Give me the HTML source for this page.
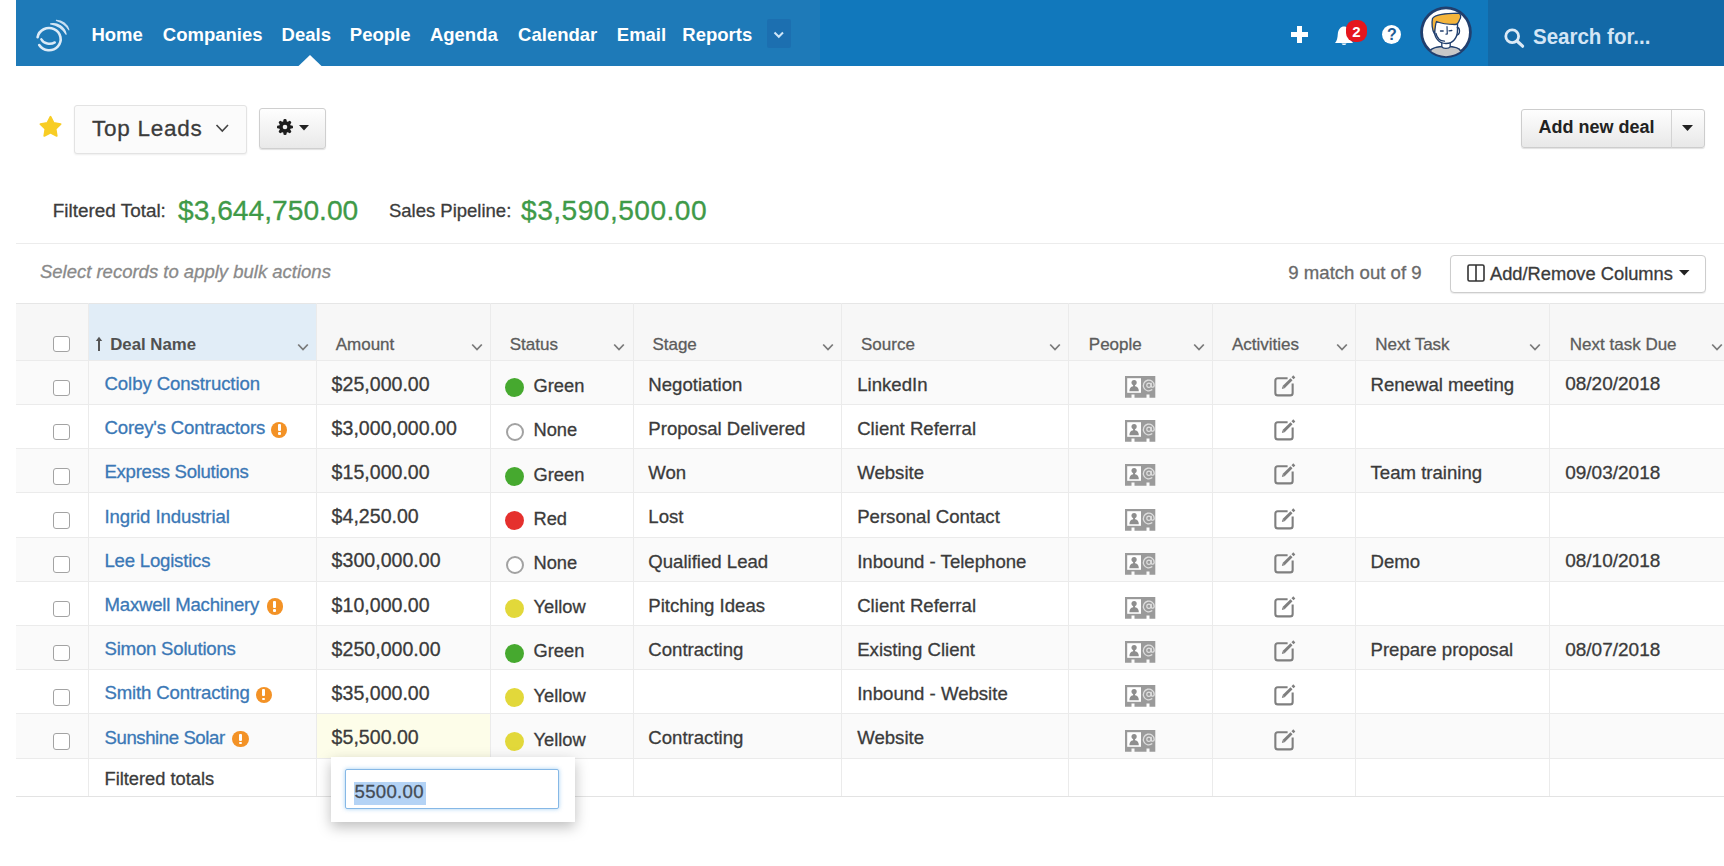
<!DOCTYPE html><html><head><meta charset="utf-8"><style>
html,body{margin:0;padding:0;background:#fff;width:1724px;height:866px;overflow:hidden;position:relative;font-family:"Liberation Sans",sans-serif;}
.t{position:absolute;white-space:nowrap;-webkit-text-stroke:0.3px currentColor;}
.r{position:absolute;box-sizing:border-box;}
svg{position:absolute;overflow:visible;}
</style></head><body>
<div class="r" style="left:16px;top:0px;width:804px;height:66.3px;background:rgb(30,122,184);"></div>
<div class="r" style="left:820px;top:0px;width:668px;height:66.3px;background:rgb(17,120,188);"></div>
<div class="r" style="left:1488px;top:0px;width:236px;height:66.3px;background:rgb(19,105,167);"></div>
<svg style="left:0;top:0" width="100" height="66"><g fill="none" stroke="#dcebf7" stroke-linecap="round">
<path d="M37.6 37.3 A11.6 11.1 0 1 1 39.2 45" stroke-width="2.6"/>
<path d="M41.3 39.3 C43.5 43.8 50.5 45 54.8 42.4" stroke-width="2.4"/>
<path d="M50.6 23.8 A13.4 13.4 0 0 1 66.1 34.2 A22 22 0 0 0 50.6 23.8 Z" fill="#d3e6f5" stroke="#d3e6f5" stroke-width="1.3" stroke-linejoin="round"/>
<path d="M56.4 20.4 A13.2 13.2 0 0 1 68.9 29.8 A22 22 0 0 0 56.4 20.4 Z" fill="#c6def2" stroke="#c6def2" stroke-width="1.2" stroke-linejoin="round"/>
</g></svg>
<div class="t" style="left:91.4px;top:23.69px;font-size:18.5px;line-height:22.2px;color:#fff;font-weight:bold;font-style:normal;-webkit-text-stroke:0;">Home</div>
<div class="t" style="left:162.8px;top:23.69px;font-size:18.5px;line-height:22.2px;color:#fff;font-weight:bold;font-style:normal;-webkit-text-stroke:0;">Companies</div>
<div class="t" style="left:281.6px;top:23.69px;font-size:18.5px;line-height:22.2px;color:#fff;font-weight:bold;font-style:normal;-webkit-text-stroke:0;">Deals</div>
<div class="t" style="left:349.8px;top:23.69px;font-size:18.5px;line-height:22.2px;color:#fff;font-weight:bold;font-style:normal;-webkit-text-stroke:0;">People</div>
<div class="t" style="left:429.9px;top:23.69px;font-size:18.5px;line-height:22.2px;color:#fff;font-weight:bold;font-style:normal;-webkit-text-stroke:0;">Agenda</div>
<div class="t" style="left:518.1px;top:23.69px;font-size:18.5px;line-height:22.2px;color:#fff;font-weight:bold;font-style:normal;-webkit-text-stroke:0;">Calendar</div>
<div class="t" style="left:616.8px;top:23.69px;font-size:18.5px;line-height:22.2px;color:#fff;font-weight:bold;font-style:normal;-webkit-text-stroke:0;">Email</div>
<div class="t" style="left:682.3px;top:23.69px;font-size:18.5px;line-height:22.2px;color:#fff;font-weight:bold;font-style:normal;-webkit-text-stroke:0;">Reports</div>
<div class="r" style="left:767px;top:19.4px;width:23.5px;height:28.6px;background:#1c6fb0;border-radius:2px;"></div>
<svg style="left:773px;top:31px" width="12" height="8"><path d="M1.5 1.5 L5.8 5.8 L10 1.5" fill="none" stroke="#cfe6f8" stroke-width="2"/></svg>
<svg style="left:298px;top:54.8px" width="24" height="12"><path d="M0 11.5 L12 0 L24 11.5 Z" fill="#fff"/></svg>
<div class="r" style="left:1290.5px;top:31.8px;width:17px;height:5px;background:#fff;"></div>
<div class="r" style="left:1296.5px;top:25.7px;width:5px;height:17px;background:#fff;"></div>
<svg style="left:1332px;top:22px" width="24" height="26"><path d="M3 21 C5 19 5.5 16 5.8 12 C6.2 7 9 4.5 12 4.5 C15 4.5 17.8 7 18.2 12 C18.5 16 19 19 21 21 Z" fill="#fff"/><path d="M9.5 21.5 A2.8 2.8 0 0 0 14.5 21.5 Z" fill="#fff"/></svg>
<div class="r" style="left:1346.2px;top:20.4px;width:21.2px;height:21.2px;background:#e5161d;border-radius:9px;"></div>
<div class="t" style="left:1352.3px;top:22.50px;font-size:15px;line-height:18.0px;color:#fff;font-weight:bold;font-style:normal;-webkit-text-stroke:0;">2</div>
<div class="r" style="left:1381.7px;top:24.5px;width:19px;height:19px;background:#fff;border-radius:50%;"></div>
<div class="t" style="left:1386.9px;top:25.46px;font-size:16px;line-height:19.2px;color:#1f5c94;font-weight:bold;font-style:normal;-webkit-text-stroke:0;">?</div>
<svg style="left:1415px;top:3px" width="62" height="60" viewBox="0 0 62 60">
<defs><clipPath id="av"><circle cx="31" cy="29.2" r="24"/></clipPath></defs>
<circle cx="31" cy="29.2" r="24.4" fill="#fff" stroke="#213f6e" stroke-width="2.8"/>
<g clip-path="url(#av)" stroke="#213f6e" stroke-linejoin="round" stroke-linecap="round">
<path d="M14.5 58 L15 48.5 C16 45 22 43.5 31 43.5 C40 43.5 45 45 45.8 48.5 L46 58 Z" fill="#c8c8c8" stroke-width="1.4"/>
<path d="M26.8 38 L26.8 43.5 C28 46 34 46 35.2 43.5 L35.2 38" fill="#fff" stroke-width="1.3"/>
<path d="M19.5 19 L19.5 28 C19.5 35 24 40.5 31 40.5 C38 40.5 42.5 35 42.5 27 L42.5 19 Z" fill="#fff" stroke-width="1.4"/>
<path d="M42.3 24.5 C45 24.5 45.5 31 42.3 32" fill="none" stroke-width="1.3"/>
<path d="M17.5 15.5 C20 11 31 10.5 43 10.2 C46 10.5 46.5 14 44.5 17 C43.5 20 42 21.5 40 21.5 C34 21.5 26 20.5 21.5 18.5 C20.5 21 20 25 19.5 31 C17 27 16.5 20 17.5 15.5 Z" fill="#f5b53b" stroke-width="1.3"/>
<path d="M25.5 28 L28.2 28 M34 27.8 L36.8 27.5" stroke-width="1.3"/>
<path d="M32 23.5 L32.3 31 L31 31.2" fill="none" stroke-width="1.2"/>
<path d="M21 30.5 C22 35 25 38 29.5 38.2" fill="none" stroke-width="1.3"/>
</g></svg>
<svg style="left:1503px;top:28px" width="24" height="22"><circle cx="9.2" cy="8.2" r="6.4" fill="none" stroke="#dceaf6" stroke-width="2.8"/><path d="M14 13 L19.6 18.2" stroke="#dceaf6" stroke-width="3.2" stroke-linecap="round"/></svg>
<div class="t" style="left:1533px;top:24.50px;font-size:20.5px;line-height:24.6px;color:#d3e5f5;font-weight:bold;font-style:normal;-webkit-text-stroke:0;transform:scaleY(1.08);transform-origin:0 80%;">Search for...</div>
<svg style="left:39px;top:114.5px" width="24" height="24" viewBox="0 0 24 24"><path d="M11.50 1.70 L14.67 7.93 L21.58 9.02 L16.64 13.97 L17.73 20.88 L11.50 17.70 L5.27 20.88 L6.36 13.97 L1.42 9.02 L8.33 7.93 Z" fill="#f8cd24" stroke="#f8cd24" stroke-width="1.8" stroke-linejoin="round"/></svg>
<div class="r" style="left:74px;top:104.5px;width:173px;height:49.5px;background:#fbfbfb;border:1px solid #e3e3e3;border-radius:3px;box-shadow:0 1px 2px rgba(0,0,0,0.07);"></div>
<div class="t" style="left:92px;top:114.70px;font-size:22.5px;line-height:27.0px;color:#3b3b3b;font-weight:normal;font-style:normal;letter-spacing:0.75px;">Top Leads</div>
<svg style="left:215px;top:123px" width="16" height="11"><path d="M1.5 2 L7.3 8 L13 2" fill="none" stroke="#444" stroke-width="1.6"/></svg>
<div class="r" style="left:259.3px;top:108px;width:66.5px;height:40.5px;background:linear-gradient(#fefefe,#e9e9e9);border:1px solid #cfcfcf;border-radius:3px;box-shadow:0 1px 1px rgba(0,0,0,0.12);"></div>
<svg style="left:276.6px;top:118.8px" width="16" height="16" viewBox="0 0 16 16"><g fill="#1e1e1e">
<circle cx="8" cy="8" r="5.9"/>
<rect x="6.4" y="0" width="3.2" height="16" rx="1.3"/>
<rect x="6.4" y="0" width="3.2" height="16" rx="1.3" transform="rotate(45 8 8)"/>
<rect x="6.4" y="0" width="3.2" height="16" rx="1.3" transform="rotate(90 8 8)"/>
<rect x="6.4" y="0" width="3.2" height="16" rx="1.3" transform="rotate(135 8 8)"/>
</g><circle cx="8" cy="8" r="2.3" fill="#f1f1f1"/></svg>
<svg style="left:298.5px;top:125px" width="11" height="7"><path d="M0 0 L10 0 L5 5.5 Z" fill="#222"/></svg>
<div class="r" style="left:1520.5px;top:108.8px;width:184px;height:39.2px;background:linear-gradient(#fefefe,#e8e8e8);border:1px solid #cdcdcd;border-radius:3px;box-shadow:0 1px 1px rgba(0,0,0,0.12);"></div>
<div class="r" style="left:1671px;top:109.5px;width:1px;height:38px;background:#d3d3d3;"></div>
<div class="t" style="left:1538.5px;top:117.16px;font-size:18px;line-height:21.6px;color:#222;font-weight:bold;font-style:normal;-webkit-text-stroke:0;">Add new deal</div>
<svg style="left:1682px;top:125px" width="12" height="8"><path d="M0 0 L11 0 L5.5 6 Z" fill="#222"/></svg>
<div class="t" style="left:52.8px;top:199.61px;font-size:18.9px;line-height:22.68px;color:#3c3c3c;font-weight:normal;font-style:normal;">Filtered Total:</div>
<div class="t" style="left:178px;top:193.81px;font-size:28.2px;line-height:33.84px;color:#3f9a48;font-weight:normal;font-style:normal;">$3,644,750.00</div>
<div class="t" style="left:388.9px;top:199.99px;font-size:18.5px;line-height:22.2px;color:#3c3c3c;font-weight:normal;font-style:normal;">Sales Pipeline:</div>
<div class="t" style="left:521px;top:193.81px;font-size:28.2px;line-height:33.84px;color:#3f9a48;font-weight:normal;font-style:normal;letter-spacing:0.45px;">$3,590,500.00</div>
<div class="r" style="left:16px;top:243px;width:1708px;height:1.2px;background:#ececec;"></div>
<div class="t" style="left:39.9px;top:261.49px;font-size:18.5px;line-height:22.2px;color:#8a8a8a;font-weight:normal;font-style:italic;">Select records to apply bulk actions</div>
<div class="t" style="left:1288.3px;top:262.40px;font-size:18.6px;line-height:22.32px;color:#6a6a6a;font-weight:normal;font-style:normal;">9 match out of 9</div>
<div class="r" style="left:1450.3px;top:254.7px;width:255.6px;height:38.5px;background:#fff;border:1px solid #cdcdcd;border-radius:4px;box-shadow:0 1px 1px rgba(0,0,0,0.08);"></div>
<svg style="left:1467px;top:264px" width="18" height="18"><rect x="1" y="1" width="16" height="16" rx="1.5" fill="none" stroke="#333" stroke-width="1.6"/><path d="M9 1 L9 17" stroke="#333" stroke-width="1.6"/></svg>
<div class="t" style="left:1490px;top:262.68px;font-size:18.3px;line-height:21.96px;color:#3b3b3b;font-weight:normal;font-style:normal;">Add/Remove Columns</div>
<svg style="left:1678.5px;top:270px" width="11" height="7"><path d="M0 0 L10.5 0 L5.25 5.5 Z" fill="#222"/></svg>
<div class="r" style="left:16px;top:303px;width:1708px;height:57.30000000000001px;background:#f7f7f7;"></div>
<div class="r" style="left:88.4px;top:303px;width:228.1px;height:57.30000000000001px;background:#e1edf7;"></div>
<div class="r" style="left:16px;top:302.5px;width:1708px;height:1px;background:#e6e6e6;"></div>
<div class="r" style="left:16px;top:360.3px;width:1708px;height:44.2px;background:#fafafa;"></div>
<div class="r" style="left:16px;top:404.5px;width:1708px;height:44.2px;background:#ffffff;"></div>
<div class="r" style="left:16px;top:448.70000000000005px;width:1708px;height:44.2px;background:#fafafa;"></div>
<div class="r" style="left:16px;top:492.90000000000003px;width:1708px;height:44.2px;background:#ffffff;"></div>
<div class="r" style="left:16px;top:537.1px;width:1708px;height:44.2px;background:#fafafa;"></div>
<div class="r" style="left:16px;top:581.3px;width:1708px;height:44.2px;background:#ffffff;"></div>
<div class="r" style="left:16px;top:625.5px;width:1708px;height:44.2px;background:#fafafa;"></div>
<div class="r" style="left:16px;top:669.7px;width:1708px;height:44.2px;background:#ffffff;"></div>
<div class="r" style="left:16px;top:713.9000000000001px;width:1708px;height:44.2px;background:#fafafa;"></div>
<div class="r" style="left:316.5px;top:713.9000000000001px;width:173.5px;height:44.2px;background:#fdfde9;"></div>
<div class="r" style="left:16px;top:758.1px;width:1708px;height:38.19999999999993px;background:#fff;"></div>
<div class="r" style="left:16px;top:359.8px;width:1708px;height:1px;background:#ebebeb;"></div>
<div class="r" style="left:16px;top:404.0px;width:1708px;height:1px;background:#ebebeb;"></div>
<div class="r" style="left:16px;top:448.20000000000005px;width:1708px;height:1px;background:#ebebeb;"></div>
<div class="r" style="left:16px;top:492.40000000000003px;width:1708px;height:1px;background:#ebebeb;"></div>
<div class="r" style="left:16px;top:536.6px;width:1708px;height:1px;background:#ebebeb;"></div>
<div class="r" style="left:16px;top:580.8px;width:1708px;height:1px;background:#ebebeb;"></div>
<div class="r" style="left:16px;top:625.0px;width:1708px;height:1px;background:#ebebeb;"></div>
<div class="r" style="left:16px;top:669.2px;width:1708px;height:1px;background:#ebebeb;"></div>
<div class="r" style="left:16px;top:713.4000000000001px;width:1708px;height:1px;background:#ebebeb;"></div>
<div class="r" style="left:16px;top:757.6px;width:1708px;height:1px;background:#ebebeb;"></div>
<div class="r" style="left:16px;top:795.8px;width:1708px;height:1.2px;background:#e3e3e3;"></div>
<div class="r" style="left:87.9px;top:303px;width:1px;height:493.29999999999995px;background:#ebebeb;"></div>
<div class="r" style="left:316.0px;top:303px;width:1px;height:493.29999999999995px;background:#ebebeb;"></div>
<div class="r" style="left:489.5px;top:303px;width:1px;height:493.29999999999995px;background:#ebebeb;"></div>
<div class="r" style="left:632.8px;top:303px;width:1px;height:493.29999999999995px;background:#ebebeb;"></div>
<div class="r" style="left:840.9px;top:303px;width:1px;height:493.29999999999995px;background:#ebebeb;"></div>
<div class="r" style="left:1068.1px;top:303px;width:1px;height:493.29999999999995px;background:#ebebeb;"></div>
<div class="r" style="left:1211.7px;top:303px;width:1px;height:493.29999999999995px;background:#ebebeb;"></div>
<div class="r" style="left:1355.0px;top:303px;width:1px;height:493.29999999999995px;background:#ebebeb;"></div>
<div class="r" style="left:1548.6px;top:303px;width:1px;height:493.29999999999995px;background:#ebebeb;"></div>
<div class="r" style="left:53px;top:335.6px;width:16.5px;height:16px;border:1.6px solid #a3a3a3;border-radius:3px;background:#fff;"></div>
<svg style="left:95px;top:336px" width="8" height="16"><path d="M4 15 L4 2" stroke="#555" stroke-width="2"/><path d="M0.8 5 L4 0.8 L7.2 5 Z" fill="#555"/></svg>
<div class="t" style="left:110.2px;top:335.40px;font-size:16.8px;line-height:20.16px;color:#505050;font-weight:bold;font-style:normal;-webkit-text-stroke:0;">Deal Name</div>
<div class="t" style="left:335.7px;top:334.61px;font-size:17px;line-height:20.4px;color:#5c5c5c;font-weight:normal;font-style:normal;">Amount</div>
<div class="t" style="left:509.7px;top:334.61px;font-size:17px;line-height:20.4px;color:#5c5c5c;font-weight:normal;font-style:normal;">Status</div>
<div class="t" style="left:652.4px;top:334.61px;font-size:17px;line-height:20.4px;color:#5c5c5c;font-weight:normal;font-style:normal;">Stage</div>
<div class="t" style="left:861px;top:334.61px;font-size:17px;line-height:20.4px;color:#5c5c5c;font-weight:normal;font-style:normal;">Source</div>
<div class="t" style="left:1088.8px;top:334.61px;font-size:17px;line-height:20.4px;color:#5c5c5c;font-weight:normal;font-style:normal;">People</div>
<div class="t" style="left:1232px;top:334.61px;font-size:17px;line-height:20.4px;color:#5c5c5c;font-weight:normal;font-style:normal;">Activities</div>
<div class="t" style="left:1375.3px;top:334.61px;font-size:17px;line-height:20.4px;color:#5c5c5c;font-weight:normal;font-style:normal;">Next Task</div>
<div class="t" style="left:1569.8px;top:334.61px;font-size:17px;line-height:20.4px;color:#5c5c5c;font-weight:normal;font-style:normal;">Next task Due</div>
<svg style="left:296.6px;top:342.5px" width="13" height="9"><path d="M1.2 1.5 L6 6.5 L10.8 1.5" fill="none" stroke="#7a7a7a" stroke-width="1.8"/></svg>
<svg style="left:470.7px;top:342.5px" width="13" height="9"><path d="M1.2 1.5 L6 6.5 L10.8 1.5" fill="none" stroke="#7a7a7a" stroke-width="1.8"/></svg>
<svg style="left:613.4px;top:342.5px" width="13" height="9"><path d="M1.2 1.5 L6 6.5 L10.8 1.5" fill="none" stroke="#7a7a7a" stroke-width="1.8"/></svg>
<svg style="left:822.3px;top:342.5px" width="13" height="9"><path d="M1.2 1.5 L6 6.5 L10.8 1.5" fill="none" stroke="#7a7a7a" stroke-width="1.8"/></svg>
<svg style="left:1048.5px;top:342.5px" width="13" height="9"><path d="M1.2 1.5 L6 6.5 L10.8 1.5" fill="none" stroke="#7a7a7a" stroke-width="1.8"/></svg>
<svg style="left:1192.8px;top:342.5px" width="13" height="9"><path d="M1.2 1.5 L6 6.5 L10.8 1.5" fill="none" stroke="#7a7a7a" stroke-width="1.8"/></svg>
<svg style="left:1335.6px;top:342.5px" width="13" height="9"><path d="M1.2 1.5 L6 6.5 L10.8 1.5" fill="none" stroke="#7a7a7a" stroke-width="1.8"/></svg>
<svg style="left:1529px;top:342.5px" width="13" height="9"><path d="M1.2 1.5 L6 6.5 L10.8 1.5" fill="none" stroke="#7a7a7a" stroke-width="1.8"/></svg>
<svg style="left:1710.6px;top:342.5px" width="13" height="9"><path d="M1.2 1.5 L6 6.5 L10.8 1.5" fill="none" stroke="#7a7a7a" stroke-width="1.8"/></svg>
<div class="r" style="left:53px;top:379.6px;width:16.5px;height:16.5px;border:1.6px solid #a3a3a3;border-radius:3px;background:#fff;"></div>
<div class="t" style="left:104.5px;top:372.90px;font-size:18.6px;line-height:22.32px;color:#3b78b6;font-weight:normal;font-style:normal;letter-spacing:-0.088px;">Colby Construction</div>
<div class="t" style="left:331.6px;top:372.55px;font-size:19.6px;line-height:23.52px;color:#3b3b3b;font-weight:normal;font-style:normal;">$25,000.00</div>
<div class="r" style="left:505px;top:378.3px;width:19px;height:19px;background:#46a92f;border-radius:50%;"></div>
<div class="t" style="left:533.5px;top:375.28px;font-size:18.3px;line-height:21.96px;color:#3b3b3b;font-weight:normal;font-style:normal;">Green</div>
<div class="t" style="left:648.3px;top:373.70px;font-size:18.6px;line-height:22.32px;color:#3b3b3b;font-weight:normal;font-style:normal;">Negotiation</div>
<div class="t" style="left:857.2px;top:373.70px;font-size:18.6px;line-height:22.32px;color:#3b3b3b;font-weight:normal;font-style:normal;">LinkedIn</div>
<svg style="left:1124.9px;top:375.90px" width="31" height="22" viewBox="0 0 31 22"><path d="M0 0 H30.3 V21.8 H24.5 V18.5 H21.5 V21.8 H9.5 V18.5 H6.5 V21.8 H0 Z" fill="#9a9a9a"/>
<rect x="2.2" y="2.2" width="13.8" height="14.6" fill="#fff"/>
<circle cx="9.1" cy="6.6" r="2.6" fill="#8e8e8e"/><path d="M4.4 15.2 C4.6 11.3 6.5 10.3 9.1 10.3 C11.7 10.3 13.6 11.3 13.8 15.2 Z" fill="#8e8e8e"/><path d="M8.1 8.5 h2 v3 h-2z" fill="#8e8e8e"/>
<path d="M27.3 13.6 A5.4 5.4 0 1 1 29.2 9.4 C29.2 11.6 26.2 11.8 26.2 9.8 L26.2 6.8" fill="none" stroke="#dedede" stroke-width="1.3"/><circle cx="23.9" cy="9.2" r="2.1" fill="none" stroke="#dedede" stroke-width="1.2"/></svg>
<svg style="left:1273px;top:375.90px" width="24" height="22" viewBox="0 0 24 22"><path d="M14.6 2.2 H4.8 A2.45 2.45 0 0 0 2.35 4.65 V16.95 A2.45 2.45 0 0 0 4.8 19.4 H17.2 A2.45 2.45 0 0 0 19.65 16.95 V7.5" fill="none" stroke="#7f7f7f" stroke-width="2.1"/>
<path d="M10.6 11.1 L18.5 3.2" stroke="#7f7f7f" stroke-width="2.9"/><path d="M19.5 2.2 L21.3 0.4" stroke="#7f7f7f" stroke-width="2.9"/><path d="M8.9 12.9 L9.5 10.2 L11.6 12.3 Z" fill="#7f7f7f"/></svg>
<div class="t" style="left:1370.5px;top:373.70px;font-size:18.6px;line-height:22.32px;color:#3b3b3b;font-weight:normal;font-style:normal;">Renewal meeting</div>
<div class="t" style="left:1565.2px;top:373.32px;font-size:19.0px;line-height:22.8px;color:#3b3b3b;font-weight:normal;font-style:normal;">08/20/2018</div>
<div class="r" style="left:53px;top:423.8px;width:16.5px;height:16.5px;border:1.6px solid #a3a3a3;border-radius:3px;background:#fff;"></div>
<div class="t" style="left:104.5px;top:417.10px;font-size:18.6px;line-height:22.32px;color:#3b78b6;font-weight:normal;font-style:normal;letter-spacing:-0.167px;">Corey's Contractors</div>
<div class="r" style="left:271.0px;top:421.5px;width:16.3px;height:16.3px;background:#f39226;border-radius:50%;"></div>
<div class="r" style="left:277.8px;top:424.2px;width:2.8px;height:7px;background:#fff;border-radius:1px;"></div>
<div class="r" style="left:277.8px;top:432.3px;width:2.8px;height:2.6px;background:#fff;border-radius:1px;"></div>
<div class="t" style="left:331.6px;top:416.75px;font-size:19.6px;line-height:23.52px;color:#3b3b3b;font-weight:normal;font-style:normal;">$3,000,000.00</div>
<div class="r" style="left:505.7px;top:423.0px;width:18.4px;height:18.4px;border:2px solid #a2a2a2;border-radius:50%;background:#fff;"></div>
<div class="t" style="left:533.5px;top:419.48px;font-size:18.3px;line-height:21.96px;color:#3b3b3b;font-weight:normal;font-style:normal;">None</div>
<div class="t" style="left:648.3px;top:417.90px;font-size:18.6px;line-height:22.32px;color:#3b3b3b;font-weight:normal;font-style:normal;">Proposal Delivered</div>
<div class="t" style="left:857.2px;top:417.90px;font-size:18.6px;line-height:22.32px;color:#3b3b3b;font-weight:normal;font-style:normal;">Client Referral</div>
<svg style="left:1124.9px;top:420.10px" width="31" height="22" viewBox="0 0 31 22"><path d="M0 0 H30.3 V21.8 H24.5 V18.5 H21.5 V21.8 H9.5 V18.5 H6.5 V21.8 H0 Z" fill="#9a9a9a"/>
<rect x="2.2" y="2.2" width="13.8" height="14.6" fill="#fff"/>
<circle cx="9.1" cy="6.6" r="2.6" fill="#8e8e8e"/><path d="M4.4 15.2 C4.6 11.3 6.5 10.3 9.1 10.3 C11.7 10.3 13.6 11.3 13.8 15.2 Z" fill="#8e8e8e"/><path d="M8.1 8.5 h2 v3 h-2z" fill="#8e8e8e"/>
<path d="M27.3 13.6 A5.4 5.4 0 1 1 29.2 9.4 C29.2 11.6 26.2 11.8 26.2 9.8 L26.2 6.8" fill="none" stroke="#dedede" stroke-width="1.3"/><circle cx="23.9" cy="9.2" r="2.1" fill="none" stroke="#dedede" stroke-width="1.2"/></svg>
<svg style="left:1273px;top:420.10px" width="24" height="22" viewBox="0 0 24 22"><path d="M14.6 2.2 H4.8 A2.45 2.45 0 0 0 2.35 4.65 V16.95 A2.45 2.45 0 0 0 4.8 19.4 H17.2 A2.45 2.45 0 0 0 19.65 16.95 V7.5" fill="none" stroke="#7f7f7f" stroke-width="2.1"/>
<path d="M10.6 11.1 L18.5 3.2" stroke="#7f7f7f" stroke-width="2.9"/><path d="M19.5 2.2 L21.3 0.4" stroke="#7f7f7f" stroke-width="2.9"/><path d="M8.9 12.9 L9.5 10.2 L11.6 12.3 Z" fill="#7f7f7f"/></svg>
<div class="r" style="left:53px;top:468.00000000000006px;width:16.5px;height:16.5px;border:1.6px solid #a3a3a3;border-radius:3px;background:#fff;"></div>
<div class="t" style="left:104.5px;top:461.30px;font-size:18.6px;line-height:22.32px;color:#3b78b6;font-weight:normal;font-style:normal;letter-spacing:-0.287px;">Express Solutions</div>
<div class="t" style="left:331.6px;top:460.95px;font-size:19.6px;line-height:23.52px;color:#3b3b3b;font-weight:normal;font-style:normal;">$15,000.00</div>
<div class="r" style="left:505px;top:466.70000000000005px;width:19px;height:19px;background:#46a92f;border-radius:50%;"></div>
<div class="t" style="left:533.5px;top:463.68px;font-size:18.3px;line-height:21.96px;color:#3b3b3b;font-weight:normal;font-style:normal;">Green</div>
<div class="t" style="left:648.3px;top:462.10px;font-size:18.6px;line-height:22.32px;color:#3b3b3b;font-weight:normal;font-style:normal;">Won</div>
<div class="t" style="left:857.2px;top:462.10px;font-size:18.6px;line-height:22.32px;color:#3b3b3b;font-weight:normal;font-style:normal;">Website</div>
<svg style="left:1124.9px;top:464.30px" width="31" height="22" viewBox="0 0 31 22"><path d="M0 0 H30.3 V21.8 H24.5 V18.5 H21.5 V21.8 H9.5 V18.5 H6.5 V21.8 H0 Z" fill="#9a9a9a"/>
<rect x="2.2" y="2.2" width="13.8" height="14.6" fill="#fff"/>
<circle cx="9.1" cy="6.6" r="2.6" fill="#8e8e8e"/><path d="M4.4 15.2 C4.6 11.3 6.5 10.3 9.1 10.3 C11.7 10.3 13.6 11.3 13.8 15.2 Z" fill="#8e8e8e"/><path d="M8.1 8.5 h2 v3 h-2z" fill="#8e8e8e"/>
<path d="M27.3 13.6 A5.4 5.4 0 1 1 29.2 9.4 C29.2 11.6 26.2 11.8 26.2 9.8 L26.2 6.8" fill="none" stroke="#dedede" stroke-width="1.3"/><circle cx="23.9" cy="9.2" r="2.1" fill="none" stroke="#dedede" stroke-width="1.2"/></svg>
<svg style="left:1273px;top:464.30px" width="24" height="22" viewBox="0 0 24 22"><path d="M14.6 2.2 H4.8 A2.45 2.45 0 0 0 2.35 4.65 V16.95 A2.45 2.45 0 0 0 4.8 19.4 H17.2 A2.45 2.45 0 0 0 19.65 16.95 V7.5" fill="none" stroke="#7f7f7f" stroke-width="2.1"/>
<path d="M10.6 11.1 L18.5 3.2" stroke="#7f7f7f" stroke-width="2.9"/><path d="M19.5 2.2 L21.3 0.4" stroke="#7f7f7f" stroke-width="2.9"/><path d="M8.9 12.9 L9.5 10.2 L11.6 12.3 Z" fill="#7f7f7f"/></svg>
<div class="t" style="left:1370.5px;top:462.10px;font-size:18.6px;line-height:22.32px;color:#3b3b3b;font-weight:normal;font-style:normal;">Team training</div>
<div class="t" style="left:1565.2px;top:461.72px;font-size:19.0px;line-height:22.8px;color:#3b3b3b;font-weight:normal;font-style:normal;">09/03/2018</div>
<div class="r" style="left:53px;top:512.2px;width:16.5px;height:16.5px;border:1.6px solid #a3a3a3;border-radius:3px;background:#fff;"></div>
<div class="t" style="left:104.5px;top:505.50px;font-size:18.6px;line-height:22.32px;color:#3b78b6;font-weight:normal;font-style:normal;letter-spacing:-0.112px;">Ingrid Industrial</div>
<div class="t" style="left:331.6px;top:505.15px;font-size:19.6px;line-height:23.52px;color:#3b3b3b;font-weight:normal;font-style:normal;">$4,250.00</div>
<div class="r" style="left:505px;top:510.90000000000003px;width:19px;height:19px;background:#e5302d;border-radius:50%;"></div>
<div class="t" style="left:533.5px;top:507.88px;font-size:18.3px;line-height:21.96px;color:#3b3b3b;font-weight:normal;font-style:normal;">Red</div>
<div class="t" style="left:648.3px;top:506.30px;font-size:18.6px;line-height:22.32px;color:#3b3b3b;font-weight:normal;font-style:normal;">Lost</div>
<div class="t" style="left:857.2px;top:506.30px;font-size:18.6px;line-height:22.32px;color:#3b3b3b;font-weight:normal;font-style:normal;">Personal Contact</div>
<svg style="left:1124.9px;top:508.50px" width="31" height="22" viewBox="0 0 31 22"><path d="M0 0 H30.3 V21.8 H24.5 V18.5 H21.5 V21.8 H9.5 V18.5 H6.5 V21.8 H0 Z" fill="#9a9a9a"/>
<rect x="2.2" y="2.2" width="13.8" height="14.6" fill="#fff"/>
<circle cx="9.1" cy="6.6" r="2.6" fill="#8e8e8e"/><path d="M4.4 15.2 C4.6 11.3 6.5 10.3 9.1 10.3 C11.7 10.3 13.6 11.3 13.8 15.2 Z" fill="#8e8e8e"/><path d="M8.1 8.5 h2 v3 h-2z" fill="#8e8e8e"/>
<path d="M27.3 13.6 A5.4 5.4 0 1 1 29.2 9.4 C29.2 11.6 26.2 11.8 26.2 9.8 L26.2 6.8" fill="none" stroke="#dedede" stroke-width="1.3"/><circle cx="23.9" cy="9.2" r="2.1" fill="none" stroke="#dedede" stroke-width="1.2"/></svg>
<svg style="left:1273px;top:508.50px" width="24" height="22" viewBox="0 0 24 22"><path d="M14.6 2.2 H4.8 A2.45 2.45 0 0 0 2.35 4.65 V16.95 A2.45 2.45 0 0 0 4.8 19.4 H17.2 A2.45 2.45 0 0 0 19.65 16.95 V7.5" fill="none" stroke="#7f7f7f" stroke-width="2.1"/>
<path d="M10.6 11.1 L18.5 3.2" stroke="#7f7f7f" stroke-width="2.9"/><path d="M19.5 2.2 L21.3 0.4" stroke="#7f7f7f" stroke-width="2.9"/><path d="M8.9 12.9 L9.5 10.2 L11.6 12.3 Z" fill="#7f7f7f"/></svg>
<div class="r" style="left:53px;top:556.4px;width:16.5px;height:16.5px;border:1.6px solid #a3a3a3;border-radius:3px;background:#fff;"></div>
<div class="t" style="left:104.5px;top:549.70px;font-size:18.6px;line-height:22.32px;color:#3b78b6;font-weight:normal;font-style:normal;letter-spacing:-0.217px;">Lee Logistics</div>
<div class="t" style="left:331.6px;top:549.35px;font-size:19.6px;line-height:23.52px;color:#3b3b3b;font-weight:normal;font-style:normal;">$300,000.00</div>
<div class="r" style="left:505.7px;top:555.6px;width:18.4px;height:18.4px;border:2px solid #a2a2a2;border-radius:50%;background:#fff;"></div>
<div class="t" style="left:533.5px;top:552.08px;font-size:18.3px;line-height:21.96px;color:#3b3b3b;font-weight:normal;font-style:normal;">None</div>
<div class="t" style="left:648.3px;top:550.50px;font-size:18.6px;line-height:22.32px;color:#3b3b3b;font-weight:normal;font-style:normal;">Qualified Lead</div>
<div class="t" style="left:857.2px;top:550.50px;font-size:18.6px;line-height:22.32px;color:#3b3b3b;font-weight:normal;font-style:normal;">Inbound - Telephone</div>
<svg style="left:1124.9px;top:552.70px" width="31" height="22" viewBox="0 0 31 22"><path d="M0 0 H30.3 V21.8 H24.5 V18.5 H21.5 V21.8 H9.5 V18.5 H6.5 V21.8 H0 Z" fill="#9a9a9a"/>
<rect x="2.2" y="2.2" width="13.8" height="14.6" fill="#fff"/>
<circle cx="9.1" cy="6.6" r="2.6" fill="#8e8e8e"/><path d="M4.4 15.2 C4.6 11.3 6.5 10.3 9.1 10.3 C11.7 10.3 13.6 11.3 13.8 15.2 Z" fill="#8e8e8e"/><path d="M8.1 8.5 h2 v3 h-2z" fill="#8e8e8e"/>
<path d="M27.3 13.6 A5.4 5.4 0 1 1 29.2 9.4 C29.2 11.6 26.2 11.8 26.2 9.8 L26.2 6.8" fill="none" stroke="#dedede" stroke-width="1.3"/><circle cx="23.9" cy="9.2" r="2.1" fill="none" stroke="#dedede" stroke-width="1.2"/></svg>
<svg style="left:1273px;top:552.70px" width="24" height="22" viewBox="0 0 24 22"><path d="M14.6 2.2 H4.8 A2.45 2.45 0 0 0 2.35 4.65 V16.95 A2.45 2.45 0 0 0 4.8 19.4 H17.2 A2.45 2.45 0 0 0 19.65 16.95 V7.5" fill="none" stroke="#7f7f7f" stroke-width="2.1"/>
<path d="M10.6 11.1 L18.5 3.2" stroke="#7f7f7f" stroke-width="2.9"/><path d="M19.5 2.2 L21.3 0.4" stroke="#7f7f7f" stroke-width="2.9"/><path d="M8.9 12.9 L9.5 10.2 L11.6 12.3 Z" fill="#7f7f7f"/></svg>
<div class="t" style="left:1370.5px;top:550.50px;font-size:18.6px;line-height:22.32px;color:#3b3b3b;font-weight:normal;font-style:normal;">Demo</div>
<div class="t" style="left:1565.2px;top:550.12px;font-size:19.0px;line-height:22.8px;color:#3b3b3b;font-weight:normal;font-style:normal;">08/10/2018</div>
<div class="r" style="left:53px;top:600.5999999999999px;width:16.5px;height:16.5px;border:1.6px solid #a3a3a3;border-radius:3px;background:#fff;"></div>
<div class="t" style="left:104.5px;top:593.90px;font-size:18.6px;line-height:22.32px;color:#3b78b6;font-weight:normal;font-style:normal;letter-spacing:-0.206px;">Maxwell Machinery</div>
<div class="r" style="left:266.6px;top:598.3px;width:16.3px;height:16.3px;background:#f39226;border-radius:50%;"></div>
<div class="r" style="left:273.40000000000003px;top:601.0px;width:2.8px;height:7px;background:#fff;border-radius:1px;"></div>
<div class="r" style="left:273.40000000000003px;top:609.0999999999999px;width:2.8px;height:2.6px;background:#fff;border-radius:1px;"></div>
<div class="t" style="left:331.6px;top:593.55px;font-size:19.6px;line-height:23.52px;color:#3b3b3b;font-weight:normal;font-style:normal;">$10,000.00</div>
<div class="r" style="left:505px;top:599.3px;width:19px;height:19px;background:#e2d83a;border-radius:50%;"></div>
<div class="t" style="left:533.5px;top:596.28px;font-size:18.3px;line-height:21.96px;color:#3b3b3b;font-weight:normal;font-style:normal;">Yellow</div>
<div class="t" style="left:648.3px;top:594.70px;font-size:18.6px;line-height:22.32px;color:#3b3b3b;font-weight:normal;font-style:normal;">Pitching Ideas</div>
<div class="t" style="left:857.2px;top:594.70px;font-size:18.6px;line-height:22.32px;color:#3b3b3b;font-weight:normal;font-style:normal;">Client Referral</div>
<svg style="left:1124.9px;top:596.90px" width="31" height="22" viewBox="0 0 31 22"><path d="M0 0 H30.3 V21.8 H24.5 V18.5 H21.5 V21.8 H9.5 V18.5 H6.5 V21.8 H0 Z" fill="#9a9a9a"/>
<rect x="2.2" y="2.2" width="13.8" height="14.6" fill="#fff"/>
<circle cx="9.1" cy="6.6" r="2.6" fill="#8e8e8e"/><path d="M4.4 15.2 C4.6 11.3 6.5 10.3 9.1 10.3 C11.7 10.3 13.6 11.3 13.8 15.2 Z" fill="#8e8e8e"/><path d="M8.1 8.5 h2 v3 h-2z" fill="#8e8e8e"/>
<path d="M27.3 13.6 A5.4 5.4 0 1 1 29.2 9.4 C29.2 11.6 26.2 11.8 26.2 9.8 L26.2 6.8" fill="none" stroke="#dedede" stroke-width="1.3"/><circle cx="23.9" cy="9.2" r="2.1" fill="none" stroke="#dedede" stroke-width="1.2"/></svg>
<svg style="left:1273px;top:596.90px" width="24" height="22" viewBox="0 0 24 22"><path d="M14.6 2.2 H4.8 A2.45 2.45 0 0 0 2.35 4.65 V16.95 A2.45 2.45 0 0 0 4.8 19.4 H17.2 A2.45 2.45 0 0 0 19.65 16.95 V7.5" fill="none" stroke="#7f7f7f" stroke-width="2.1"/>
<path d="M10.6 11.1 L18.5 3.2" stroke="#7f7f7f" stroke-width="2.9"/><path d="M19.5 2.2 L21.3 0.4" stroke="#7f7f7f" stroke-width="2.9"/><path d="M8.9 12.9 L9.5 10.2 L11.6 12.3 Z" fill="#7f7f7f"/></svg>
<div class="r" style="left:53px;top:644.8px;width:16.5px;height:16.5px;border:1.6px solid #a3a3a3;border-radius:3px;background:#fff;"></div>
<div class="t" style="left:104.5px;top:638.10px;font-size:18.6px;line-height:22.32px;color:#3b78b6;font-weight:normal;font-style:normal;letter-spacing:-0.214px;">Simon Solutions</div>
<div class="t" style="left:331.6px;top:637.75px;font-size:19.6px;line-height:23.52px;color:#3b3b3b;font-weight:normal;font-style:normal;">$250,000.00</div>
<div class="r" style="left:505px;top:643.5px;width:19px;height:19px;background:#46a92f;border-radius:50%;"></div>
<div class="t" style="left:533.5px;top:640.48px;font-size:18.3px;line-height:21.96px;color:#3b3b3b;font-weight:normal;font-style:normal;">Green</div>
<div class="t" style="left:648.3px;top:638.90px;font-size:18.6px;line-height:22.32px;color:#3b3b3b;font-weight:normal;font-style:normal;">Contracting</div>
<div class="t" style="left:857.2px;top:638.90px;font-size:18.6px;line-height:22.32px;color:#3b3b3b;font-weight:normal;font-style:normal;">Existing Client</div>
<svg style="left:1124.9px;top:641.10px" width="31" height="22" viewBox="0 0 31 22"><path d="M0 0 H30.3 V21.8 H24.5 V18.5 H21.5 V21.8 H9.5 V18.5 H6.5 V21.8 H0 Z" fill="#9a9a9a"/>
<rect x="2.2" y="2.2" width="13.8" height="14.6" fill="#fff"/>
<circle cx="9.1" cy="6.6" r="2.6" fill="#8e8e8e"/><path d="M4.4 15.2 C4.6 11.3 6.5 10.3 9.1 10.3 C11.7 10.3 13.6 11.3 13.8 15.2 Z" fill="#8e8e8e"/><path d="M8.1 8.5 h2 v3 h-2z" fill="#8e8e8e"/>
<path d="M27.3 13.6 A5.4 5.4 0 1 1 29.2 9.4 C29.2 11.6 26.2 11.8 26.2 9.8 L26.2 6.8" fill="none" stroke="#dedede" stroke-width="1.3"/><circle cx="23.9" cy="9.2" r="2.1" fill="none" stroke="#dedede" stroke-width="1.2"/></svg>
<svg style="left:1273px;top:641.10px" width="24" height="22" viewBox="0 0 24 22"><path d="M14.6 2.2 H4.8 A2.45 2.45 0 0 0 2.35 4.65 V16.95 A2.45 2.45 0 0 0 4.8 19.4 H17.2 A2.45 2.45 0 0 0 19.65 16.95 V7.5" fill="none" stroke="#7f7f7f" stroke-width="2.1"/>
<path d="M10.6 11.1 L18.5 3.2" stroke="#7f7f7f" stroke-width="2.9"/><path d="M19.5 2.2 L21.3 0.4" stroke="#7f7f7f" stroke-width="2.9"/><path d="M8.9 12.9 L9.5 10.2 L11.6 12.3 Z" fill="#7f7f7f"/></svg>
<div class="t" style="left:1370.5px;top:638.90px;font-size:18.6px;line-height:22.32px;color:#3b3b3b;font-weight:normal;font-style:normal;">Prepare proposal</div>
<div class="t" style="left:1565.2px;top:638.52px;font-size:19.0px;line-height:22.8px;color:#3b3b3b;font-weight:normal;font-style:normal;">08/07/2018</div>
<div class="r" style="left:53px;top:689.0px;width:16.5px;height:16.5px;border:1.6px solid #a3a3a3;border-radius:3px;background:#fff;"></div>
<div class="t" style="left:104.5px;top:682.30px;font-size:18.6px;line-height:22.32px;color:#3b78b6;font-weight:normal;font-style:normal;letter-spacing:-0.156px;">Smith Contracting</div>
<div class="r" style="left:255.6px;top:686.7px;width:16.3px;height:16.3px;background:#f39226;border-radius:50%;"></div>
<div class="r" style="left:262.4px;top:689.4000000000001px;width:2.8px;height:7px;background:#fff;border-radius:1px;"></div>
<div class="r" style="left:262.4px;top:697.5px;width:2.8px;height:2.6px;background:#fff;border-radius:1px;"></div>
<div class="t" style="left:331.6px;top:681.95px;font-size:19.6px;line-height:23.52px;color:#3b3b3b;font-weight:normal;font-style:normal;">$35,000.00</div>
<div class="r" style="left:505px;top:687.7px;width:19px;height:19px;background:#e2d83a;border-radius:50%;"></div>
<div class="t" style="left:533.5px;top:684.68px;font-size:18.3px;line-height:21.96px;color:#3b3b3b;font-weight:normal;font-style:normal;">Yellow</div>
<div class="t" style="left:857.2px;top:683.10px;font-size:18.6px;line-height:22.32px;color:#3b3b3b;font-weight:normal;font-style:normal;">Inbound - Website</div>
<svg style="left:1124.9px;top:685.30px" width="31" height="22" viewBox="0 0 31 22"><path d="M0 0 H30.3 V21.8 H24.5 V18.5 H21.5 V21.8 H9.5 V18.5 H6.5 V21.8 H0 Z" fill="#9a9a9a"/>
<rect x="2.2" y="2.2" width="13.8" height="14.6" fill="#fff"/>
<circle cx="9.1" cy="6.6" r="2.6" fill="#8e8e8e"/><path d="M4.4 15.2 C4.6 11.3 6.5 10.3 9.1 10.3 C11.7 10.3 13.6 11.3 13.8 15.2 Z" fill="#8e8e8e"/><path d="M8.1 8.5 h2 v3 h-2z" fill="#8e8e8e"/>
<path d="M27.3 13.6 A5.4 5.4 0 1 1 29.2 9.4 C29.2 11.6 26.2 11.8 26.2 9.8 L26.2 6.8" fill="none" stroke="#dedede" stroke-width="1.3"/><circle cx="23.9" cy="9.2" r="2.1" fill="none" stroke="#dedede" stroke-width="1.2"/></svg>
<svg style="left:1273px;top:685.30px" width="24" height="22" viewBox="0 0 24 22"><path d="M14.6 2.2 H4.8 A2.45 2.45 0 0 0 2.35 4.65 V16.95 A2.45 2.45 0 0 0 4.8 19.4 H17.2 A2.45 2.45 0 0 0 19.65 16.95 V7.5" fill="none" stroke="#7f7f7f" stroke-width="2.1"/>
<path d="M10.6 11.1 L18.5 3.2" stroke="#7f7f7f" stroke-width="2.9"/><path d="M19.5 2.2 L21.3 0.4" stroke="#7f7f7f" stroke-width="2.9"/><path d="M8.9 12.9 L9.5 10.2 L11.6 12.3 Z" fill="#7f7f7f"/></svg>
<div class="r" style="left:53px;top:733.2px;width:16.5px;height:16.5px;border:1.6px solid #a3a3a3;border-radius:3px;background:#fff;"></div>
<div class="t" style="left:104.5px;top:726.50px;font-size:18.6px;line-height:22.32px;color:#3b78b6;font-weight:normal;font-style:normal;letter-spacing:-0.423px;">Sunshine Solar</div>
<div class="r" style="left:232.4px;top:730.9000000000001px;width:16.3px;height:16.3px;background:#f39226;border-radius:50%;"></div>
<div class="r" style="left:239.20000000000002px;top:733.6000000000001px;width:2.8px;height:7px;background:#fff;border-radius:1px;"></div>
<div class="r" style="left:239.20000000000002px;top:741.7px;width:2.8px;height:2.6px;background:#fff;border-radius:1px;"></div>
<div class="t" style="left:331.6px;top:726.15px;font-size:19.6px;line-height:23.52px;color:#3b3b3b;font-weight:normal;font-style:normal;">$5,500.00</div>
<div class="r" style="left:505px;top:731.9000000000001px;width:19px;height:19px;background:#e2d83a;border-radius:50%;"></div>
<div class="t" style="left:533.5px;top:728.88px;font-size:18.3px;line-height:21.96px;color:#3b3b3b;font-weight:normal;font-style:normal;">Yellow</div>
<div class="t" style="left:648.3px;top:727.30px;font-size:18.6px;line-height:22.32px;color:#3b3b3b;font-weight:normal;font-style:normal;">Contracting</div>
<div class="t" style="left:857.2px;top:727.30px;font-size:18.6px;line-height:22.32px;color:#3b3b3b;font-weight:normal;font-style:normal;">Website</div>
<svg style="left:1124.9px;top:729.50px" width="31" height="22" viewBox="0 0 31 22"><path d="M0 0 H30.3 V21.8 H24.5 V18.5 H21.5 V21.8 H9.5 V18.5 H6.5 V21.8 H0 Z" fill="#9a9a9a"/>
<rect x="2.2" y="2.2" width="13.8" height="14.6" fill="#fff"/>
<circle cx="9.1" cy="6.6" r="2.6" fill="#8e8e8e"/><path d="M4.4 15.2 C4.6 11.3 6.5 10.3 9.1 10.3 C11.7 10.3 13.6 11.3 13.8 15.2 Z" fill="#8e8e8e"/><path d="M8.1 8.5 h2 v3 h-2z" fill="#8e8e8e"/>
<path d="M27.3 13.6 A5.4 5.4 0 1 1 29.2 9.4 C29.2 11.6 26.2 11.8 26.2 9.8 L26.2 6.8" fill="none" stroke="#dedede" stroke-width="1.3"/><circle cx="23.9" cy="9.2" r="2.1" fill="none" stroke="#dedede" stroke-width="1.2"/></svg>
<svg style="left:1273px;top:729.50px" width="24" height="22" viewBox="0 0 24 22"><path d="M14.6 2.2 H4.8 A2.45 2.45 0 0 0 2.35 4.65 V16.95 A2.45 2.45 0 0 0 4.8 19.4 H17.2 A2.45 2.45 0 0 0 19.65 16.95 V7.5" fill="none" stroke="#7f7f7f" stroke-width="2.1"/>
<path d="M10.6 11.1 L18.5 3.2" stroke="#7f7f7f" stroke-width="2.9"/><path d="M19.5 2.2 L21.3 0.4" stroke="#7f7f7f" stroke-width="2.9"/><path d="M8.9 12.9 L9.5 10.2 L11.6 12.3 Z" fill="#7f7f7f"/></svg>
<div class="t" style="left:104.5px;top:768.18px;font-size:18.3px;line-height:21.96px;color:#3b3b3b;font-weight:normal;font-style:normal;">Filtered totals</div>
<div class="r" style="left:331px;top:757.4px;width:243.5px;height:65px;background:#fff;box-shadow:0 5px 13px rgba(0,0,0,0.26);"></div>
<div class="r" style="left:345.1px;top:768.8px;width:214px;height:39.8px;background:#fff;border:1.5px solid #86b8e6;border-radius:2px;box-shadow:0 0 4px rgba(102,175,233,0.6);"></div>
<div class="r" style="left:354.4px;top:781.8px;width:72px;height:23.5px;background:#b4d3f5;"></div>
<div class="t" style="left:354.5px;top:780.90px;font-size:18.6px;line-height:22.32px;color:#444c55;font-weight:normal;font-style:normal;letter-spacing:0.3px;">5500.00</div>
</body></html>
